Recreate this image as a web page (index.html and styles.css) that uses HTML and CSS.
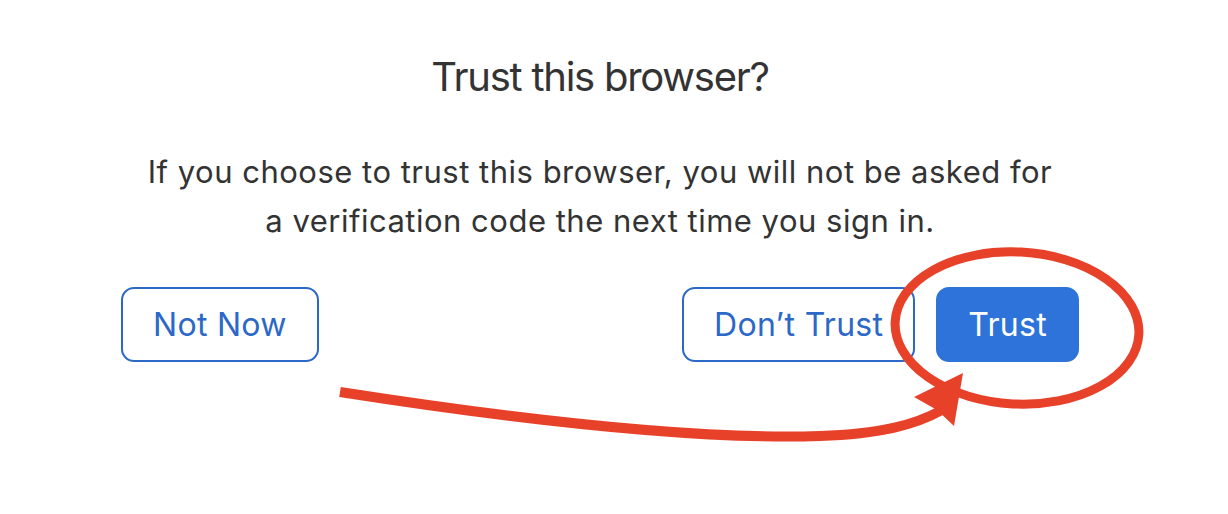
FILE: index.html
```html
<!DOCTYPE html>
<html lang="en">
<head>
<meta charset="utf-8">
<title>Trust this browser?</title>
<link rel="stylesheet" href="styles.css">
</head>
<body>
<main class="dialog">
  <h1 class="title">Trust this browser?</h1>
  <p class="message">If you choose to trust this browser, you will not be asked for<br>a verification code the next time you sign in.</p>
  <div class="actions">
    <button class="btn btn-outline">Not Now</button>
    <div class="actions-right">
      <button class="btn btn-outline">Don’t Trust</button>
      <button class="btn btn-primary">Trust</button>
    </div>
  </div>
</main>
<svg class="annotation" width="1228" height="514" viewBox="0 0 1228 514" aria-hidden="true">
  <ellipse cx="1017" cy="328" rx="122" ry="76" transform="rotate(3 1017 328)" fill="none" stroke="#e8412a" stroke-width="9"/>
  <path d="M340 392 C 520 420, 700 440, 820 436 C 880 434, 915 425, 942 410" fill="none" stroke="#e8412a" stroke-width="10"/>
  <polygon points="963,373 954,426 937,410 914,397" fill="#e8412a"/>
</svg>
</body>
</html>
```

FILE: styles.css
```css
html, body {
  margin: 0;
  padding: 0;
  background: #ffffff;
}

body {
  width: 1228px;
  height: 514px;
  position: relative;
  overflow: hidden;
  font-family: "Inter", "Roboto", "Liberation Sans", sans-serif;
  color: #333333;
}

.dialog {
  width: 958px;
  margin-left: 121px;
  padding-top: 51px;
  display: flex;
  flex-direction: column;
  align-items: center;
}

.title {
  margin: 0;
  font-size: 40px;
  font-weight: 400;
  line-height: 52px;
  letter-spacing: -1.25px;
  color: #333333;
}

.message {
  margin: 44px 0 0;
  font-size: 31px;
  line-height: 49px;
  letter-spacing: 0.5px;
  text-align: center;
  color: #333333;
}

.actions {
  align-self: stretch;
  margin-top: 42px;
  display: flex;
  justify-content: space-between;
}

.actions-right {
  display: flex;
  gap: 21px;
}

.btn {
  box-sizing: border-box;
  height: 75px;
  padding: 0 30px;
  border-radius: 13px;
  font-family: inherit;
  font-size: 32px;
  letter-spacing: 0.3px;
  cursor: pointer;
}

.btn-outline {
  background: #ffffff;
  border: 2px solid #2b68c7;
  color: #2b68c7;
}

.btn-primary {
  min-width: 141px;
  background: #2e73da;
  border: 2px solid #2e73da;
  color: #ffffff;
}

.annotation {
  position: absolute;
  left: 0;
  top: 0;
  pointer-events: none;
}
```
